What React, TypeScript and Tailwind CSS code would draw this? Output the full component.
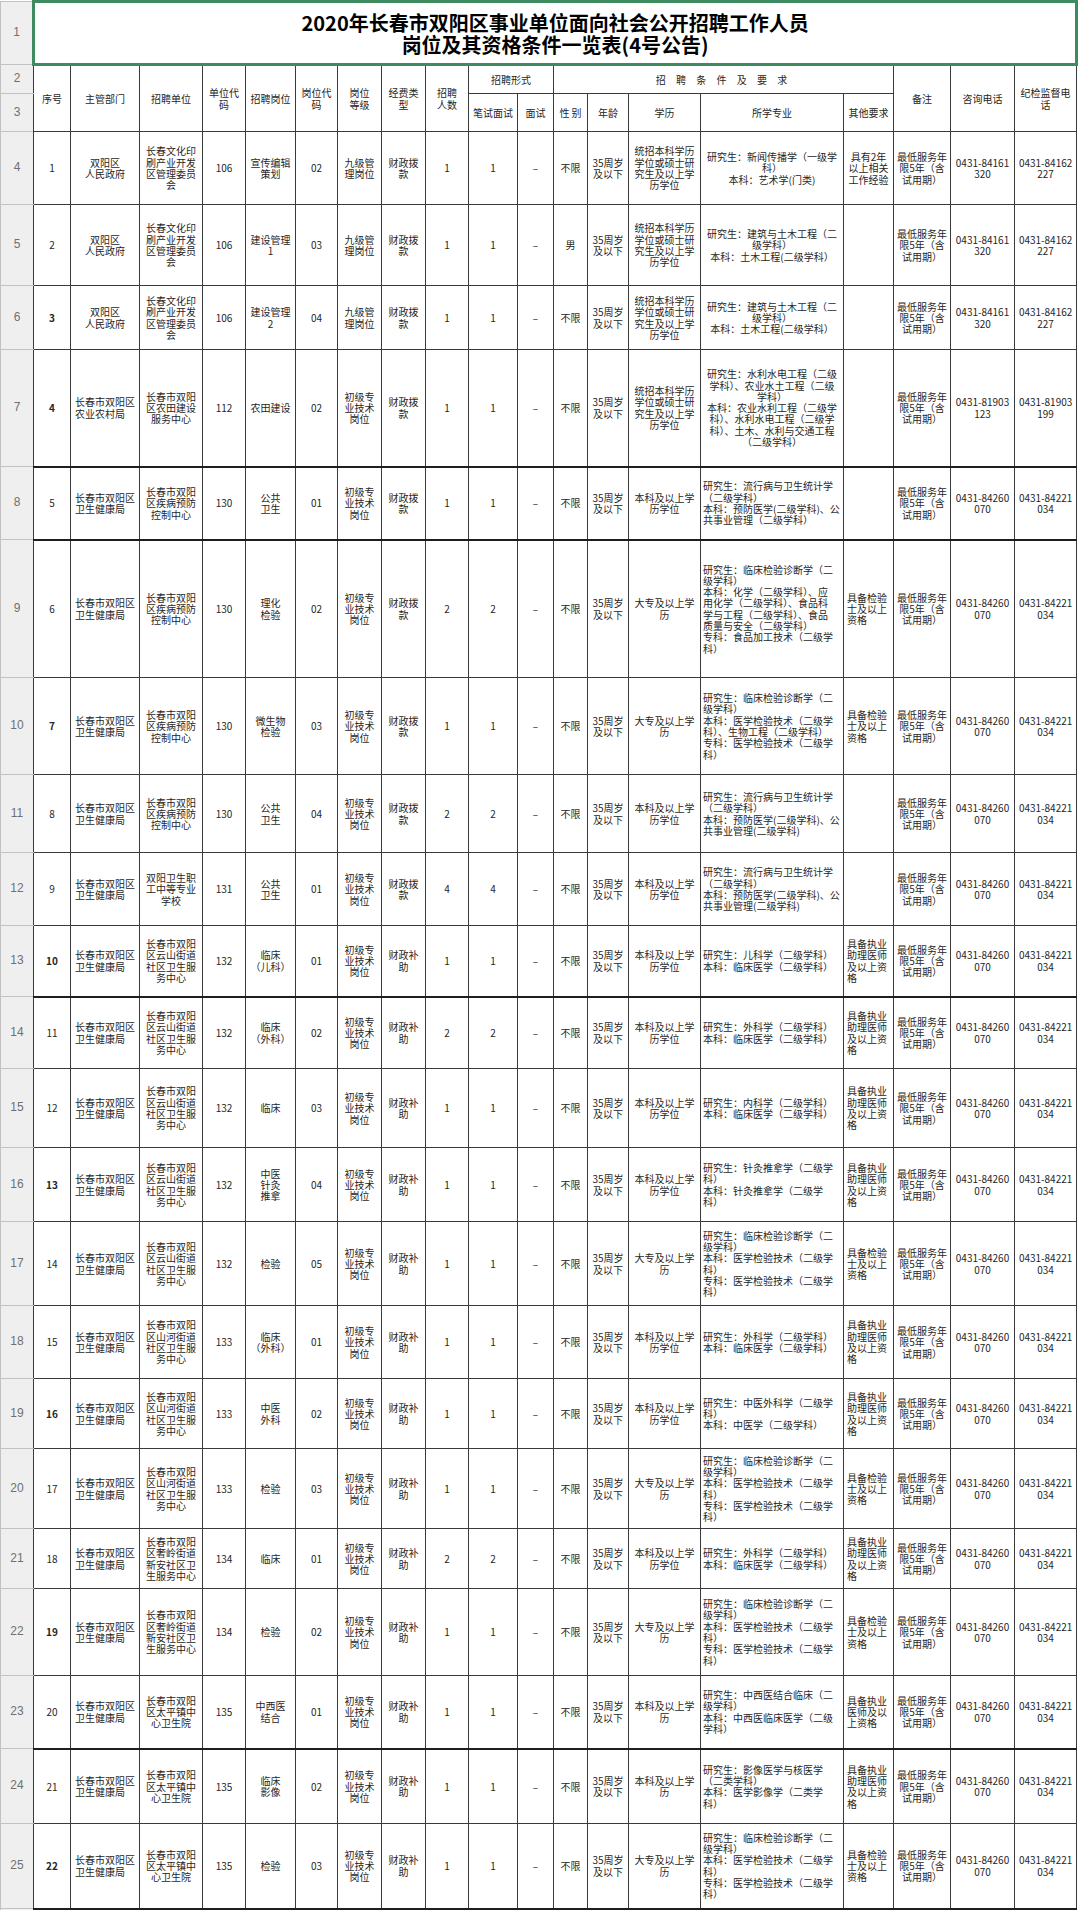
import React from 'react';

type Row = {
  seq: number;
  bold?: boolean;
  dept: string;
  unit: string;
  code: string;
  post: string;
  postCode: string;
  level: string;
  fund: string;
  num: string;
  gender?: string;
  edu: string;
  major: string;
  center?: boolean;
  other: string;
  p1: string;
  p2: string;
  h: string;
  thick?: boolean;
};

const DY = '双阳区\n人民政府';
const WJ = '长春市双阳区\n卫生健康局';
const CW = '长春文化印\n刷产业开发\n区管理委员\n会';
const JK = '长春市双阳\n区疾病预防\n控制中心';
const YS = '长春市双阳\n区云山街道\n社区卫生服\n务中心';
const SH = '长春市双阳\n区山河街道\n社区卫生服\n务中心';
const SL = '长春市双阳\n区奢岭街道\n新安社区卫\n生服务中心';
const TP = '长春市双阳\n区太平镇中\n心卫生院';
const JG = '九级管\n理岗位';
const CJ = '初级专\n业技术\n岗位';
const BK = '财政拨\n款';
const BZ = '财政补\n助';
const TZ = '统招本科学历\n学位或硕士研\n究生及以上学\n历学位';
const BKXW = '本科及以上学\n历学位';
const BKL = '本科及以上学\n历';
const DZ = '大专及以上学\n历';
const JY = '具备检验\n士及以上\n资格';
const ZY = '具备执业\n助理医师\n及以上资\n格';
const JYM = '研究生：临床检验诊断学（二\n级学科）\n本科：医学检验技术（二级学\n科）\n专科：医学检验技术（二级学\n科）';
const WK = '研究生：外科学（二级学科）\n本科：临床医学（二级学科）';
const GW = '研究生：流行病与卫生统计学\n（二级学科）\n本科：预防医学(二级学科)、公\n共事业管理(二级学科)';
const JZ = '研究生：建筑与土木工程（二\n级学科）\n本科：土木工程(二级学科）';
const CC1 = '0431-84161\n320';
const CC2 = '0431-84162\n227';
const WJ1 = '0431-84260\n070';
const WJ2 = '0431-84221\n034';

const rows: Row[] = [
  { seq: 1, dept: DY, unit: CW, code: '106', post: '宣传编辑\n策划', postCode: '02', level: JG, fund: BK, num: '1', edu: TZ, major: '研究生：新闻传播学（一级学\n科）\n本科：艺术学(门类)', center: true, other: '具有2年\n以上相关\n工作经验', p1: CC1, p2: CC2, h: 'h-[73px]' },
  { seq: 2, dept: DY, unit: CW, code: '106', post: '建设管理\n1', postCode: '03', level: JG, fund: BK, num: '1', gender: '男', edu: TZ, major: JZ, center: true, other: '', p1: CC1, p2: CC2, h: 'h-[81px]' },
  { seq: 3, bold: true, dept: DY, unit: CW, code: '106', post: '建设管理\n2', postCode: '04', level: JG, fund: BK, num: '1', edu: TZ, major: JZ, center: true, other: '', p1: CC1, p2: CC2, h: 'h-[64px]' },
  { seq: 4, bold: true, dept: '长春市双阳区\n农业农村局', unit: '长春市双阳\n区农田建设\n服务中心', code: '112', post: '农田建设', postCode: '02', level: CJ, fund: BK, num: '1', edu: TZ, major: '研究生：水利水电工程（二级\n学科）、农业水土工程（二级\n学科）\n本科：农业水利工程（二级学\n科）、水利水电工程（二级学\n科）、土木、水利与交通工程\n（二级学科）', center: true, other: '', p1: '0431-81903\n123', p2: '0431-81903\n199', h: 'h-[117px]', thick: true },
  { seq: 5, dept: WJ, unit: JK, code: '130', post: '公共\n卫生', postCode: '01', level: CJ, fund: BK, num: '1', edu: BKXW, major: '研究生：流行病与卫生统计学\n（二级学科）\n本科：预防医学(二级学科)、公\n共事业管理（二级学科）', other: '', p1: WJ1, p2: WJ2, h: 'h-[73px]', thick: true },
  { seq: 6, dept: WJ, unit: JK, code: '130', post: '理化\n检验', postCode: '02', level: CJ, fund: BK, num: '2', edu: DZ, major: '研究生：临床检验诊断学（二\n级学科）\n本科：化学（二级学科）、应\n用化学（二级学科）、食品科\n学与工程（二级学科）、食品\n质量与安全（二级学科）\n专科：食品加工技术（二级学\n科）', other: JY, p1: WJ1, p2: WJ2, h: 'h-[138px]' },
  { seq: 7, bold: true, dept: WJ, unit: JK, code: '130', post: '微生物\n检验', postCode: '03', level: CJ, fund: BK, num: '1', edu: DZ, major: '研究生：临床检验诊断学（二\n级学科）\n本科：医学检验技术（二级学\n科）、生物工程（二级学科）\n专科：医学检验技术（二级学\n科）', other: JY, p1: WJ1, p2: WJ2, h: 'h-[97px]' },
  { seq: 8, dept: WJ, unit: JK, code: '130', post: '公共\n卫生', postCode: '04', level: CJ, fund: BK, num: '2', edu: BKXW, major: GW, other: '', p1: WJ1, p2: WJ2, h: 'h-[78px]' },
  { seq: 9, dept: WJ, unit: '双阳卫生职\n工中等专业\n学校', code: '131', post: '公共\n卫生', postCode: '01', level: CJ, fund: BK, num: '4', edu: BKXW, major: GW, other: '', p1: WJ1, p2: WJ2, h: 'h-[73px]' },
  { seq: 10, bold: true, dept: WJ, unit: YS, code: '132', post: '临床\n（儿科）', postCode: '01', level: CJ, fund: BZ, num: '1', edu: BKXW, major: '研究生：儿科学（二级学科）\n本科：临床医学（二级学科）', other: ZY, p1: WJ1, p2: WJ2, h: 'h-[71px]', thick: true },
  { seq: 11, dept: WJ, unit: YS, code: '132', post: '临床\n（外科）', postCode: '02', level: CJ, fund: BZ, num: '2', edu: BKXW, major: WK, other: ZY, p1: WJ1, p2: WJ2, h: 'h-[72px]' },
  { seq: 12, dept: WJ, unit: YS, code: '132', post: '临床', postCode: '03', level: CJ, fund: BZ, num: '1', edu: BKXW, major: '研究生：内科学（二级学科）\n本科：临床医学（二级学科）', other: ZY, p1: WJ1, p2: WJ2, h: 'h-[79px]' },
  { seq: 13, bold: true, dept: WJ, unit: YS, code: '132', post: '中医\n针灸\n推拿', postCode: '04', level: CJ, fund: BZ, num: '1', edu: BKXW, major: '研究生：针灸推拿学（二级学\n科）\n本科：针灸推拿学（二级学\n科）', other: ZY, p1: WJ1, p2: WJ2, h: 'h-[74px]' },
  { seq: 14, dept: WJ, unit: YS, code: '132', post: '检验', postCode: '05', level: CJ, fund: BZ, num: '1', edu: DZ, major: JYM, other: JY, p1: WJ1, p2: WJ2, h: 'h-[84px]' },
  { seq: 15, dept: WJ, unit: SH, code: '133', post: '临床\n（外科）', postCode: '01', level: CJ, fund: BZ, num: '1', edu: BKXW, major: WK, other: ZY, p1: WJ1, p2: WJ2, h: 'h-[73px]' },
  { seq: 16, bold: true, dept: WJ, unit: SH, code: '133', post: '中医\n外科', postCode: '02', level: CJ, fund: BZ, num: '1', edu: BKXW, major: '研究生：中医外科学（二级学\n科）\n本科：中医学（二级学科）', other: ZY, p1: WJ1, p2: WJ2, h: 'h-[70px]' },
  { seq: 17, dept: WJ, unit: SH, code: '133', post: '检验', postCode: '03', level: CJ, fund: BZ, num: '1', edu: DZ, major: JYM, other: JY, p1: WJ1, p2: WJ2, h: 'h-[80px]' },
  { seq: 18, dept: WJ, unit: SL, code: '134', post: '临床', postCode: '01', level: CJ, fund: BZ, num: '2', edu: BKXW, major: WK, other: ZY, p1: WJ1, p2: WJ2, h: 'h-[60px]' },
  { seq: 19, bold: true, dept: WJ, unit: SL, code: '134', post: '检验', postCode: '02', level: CJ, fund: BZ, num: '1', edu: DZ, major: JYM, other: JY, p1: WJ1, p2: WJ2, h: 'h-[87px]' },
  { seq: 20, dept: WJ, unit: TP, code: '135', post: '中西医\n结合', postCode: '01', level: CJ, fund: BZ, num: '1', edu: BKL, major: '研究生：中西医结合临床（二\n级学科）\n本科：中西医临床医学（二级\n学科）', other: '具备执业\n医师及以\n上资格', p1: WJ1, p2: WJ2, h: 'h-[73px]', thick: true },
  { seq: 21, dept: WJ, unit: TP, code: '135', post: '临床\n影像', postCode: '02', level: CJ, fund: BZ, num: '1', edu: BKL, major: '研究生：影像医学与核医学\n（二类学科）\n本科：医学影像学（二类学\n科）', other: ZY, p1: WJ1, p2: WJ2, h: 'h-[75px]' },
  { seq: 22, bold: true, dept: WJ, unit: TP, code: '135', post: '检验', postCode: '03', level: CJ, fund: BZ, num: '1', edu: DZ, major: JYM, other: JY, p1: WJ1, p2: WJ2, h: 'h-[85px]', thick: true },
];

const cell = 'border border-[#3a3a3a] px-[2px] text-center align-middle whitespace-pre-line';
const rowHead = 'border border-[#c2c2c2] border-r-[#3a3a3a] bg-[#efefef] text-[#707070] text-[12px] text-center align-middle font-["Liberation_Sans",sans-serif]';

const App: React.FC = () => {
  return (
    <div className="w-[1080px] min-h-[1910px] bg-white overflow-hidden text-[10px] leading-[11.3px] text-[#262626] font-['Noto_Sans_CJK_SC','Noto_Sans',sans-serif]">
      <table className="table-fixed border-collapse w-[1076px]">
        <colgroup>
          <col className="w-[33px]" />
          <col className="w-[37px]" />
          <col className="w-[69px]" />
          <col className="w-[63px]" />
          <col className="w-[43px]" />
          <col className="w-[50px]" />
          <col className="w-[42px]" />
          <col className="w-[44px]" />
          <col className="w-[44px]" />
          <col className="w-[43px]" />
          <col className="w-[49px]" />
          <col className="w-[36px]" />
          <col className="w-[34px]" />
          <col className="w-[41px]" />
          <col className="w-[72px]" />
          <col className="w-[143px]" />
          <col className="w-[50px]" />
          <col className="w-[57px]" />
          <col className="w-[64px]" />
          <col className="w-[62px]" />
        </colgroup>
        <tbody>
          {/* title row */}
          <tr className="h-[63px]">
            <td className={rowHead}>1</td>
            <td
              colSpan={19}
              className="border-[3px] border-[#3d8b5e] text-center align-middle text-[20px] leading-[22px] font-bold text-black pt-[2px]"
            >
              <div>2020年长春市双阳区事业单位面向社会公开招聘工作人员</div>
              <div>岗位及其资格条件一览表(4号公告)</div>
            </td>
          </tr>

          {/* header rows */}
          <tr className="h-[29px]">
            <td className={rowHead}>2</td>
            <td rowSpan={2} className={cell}>序号</td>
            <td rowSpan={2} className={cell}>主管部门</td>
            <td rowSpan={2} className={cell}>招聘单位</td>
            <td rowSpan={2} className={cell}>{'单位代\n码'}</td>
            <td rowSpan={2} className={cell}>招聘岗位</td>
            <td rowSpan={2} className={cell}>{'岗位代\n码'}</td>
            <td rowSpan={2} className={cell}>{'岗位\n等级'}</td>
            <td rowSpan={2} className={cell}>{'经费类\n型'}</td>
            <td rowSpan={2} className={cell}>{'招聘\n人数'}</td>
            <td colSpan={2} className={cell}>招聘形式</td>
            <td colSpan={5} className={`${cell} tracking-[4px]`}>招 聘 条 件 及 要 求</td>
            <td rowSpan={2} className={cell}>备注</td>
            <td rowSpan={2} className={cell}>咨询电话</td>
            <td rowSpan={2} className={cell}>{'纪检监督电\n话'}</td>
          </tr>
          <tr className="h-[38px]">
            <td className={rowHead}>3</td>
            <td className={cell}>笔试面试</td>
            <td className={cell}>面试</td>
            <td className={cell}>性 别</td>
            <td className={cell}>年龄</td>
            <td className={cell}>学历</td>
            <td className={cell}>所学专业</td>
            <td className={cell}>其他要求</td>
          </tr>

          {rows.map((r, i) => {
            const c = r.thick ? `${cell} border-b-2 border-b-[#1e1e1e]` : cell;
            const left = r.dept.startsWith('长春') ? `${c} text-left pl-[4px]` : c;
            return (
              <tr key={r.seq} className={r.h}>
                <td className={rowHead}>{i + 4}</td>
                <td className={r.bold ? `${c} font-bold` : c}>{r.seq}</td>
                <td className={left}>{r.dept}</td>
                <td className={c}>{r.unit}</td>
                <td className={c}>{r.code}</td>
                <td className={c}>{r.post}</td>
                <td className={c}>{r.postCode}</td>
                <td className={c}>{r.level}</td>
                <td className={c}>{r.fund}</td>
                <td className={c}>{r.num}</td>
                <td className={c}>{r.num}</td>
                <td className={c}>–</td>
                <td className={c}>{r.gender ?? '不限'}</td>
                <td className={c}>{'35周岁\n及以下'}</td>
                <td className={c}>{r.edu}</td>
                <td className={r.center ? c : `${c} text-left`}>{r.major}</td>
                <td className={r.center ? c : `${c} text-left pl-[3px]`}>{r.other}</td>
                <td className={c}>{'最低服务年\n限5年（含\n试用期）'}</td>
                <td className={c}>{r.p1}</td>
                <td className={c}>{r.p2}</td>
              </tr>
            );
          })}

          <tr className="h-[12px]">
            <td className={rowHead}></td>
            {Array.from({ length: 19 }).map((_, k) => (
              <td key={k} className={cell}></td>
            ))}
          </tr>
        </tbody>
      </table>
    </div>
  );
};

export default App;
